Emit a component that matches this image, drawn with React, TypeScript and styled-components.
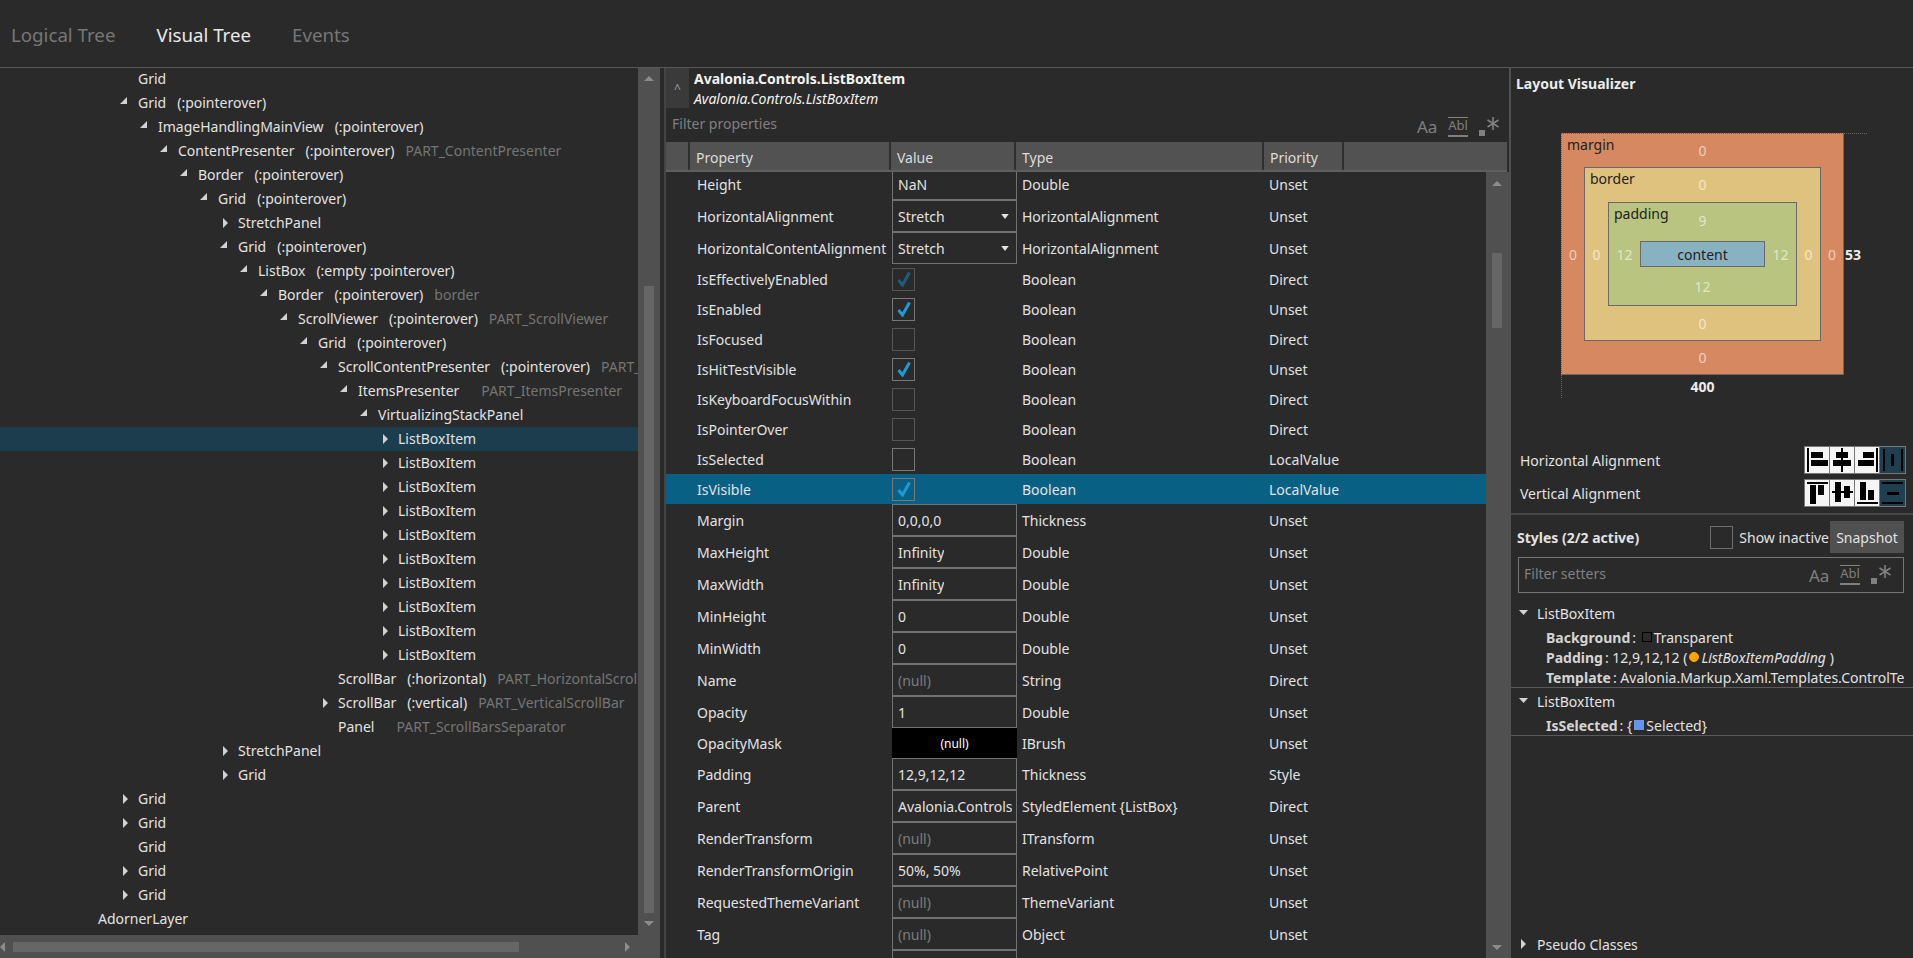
import React from "react";
import styled, { createGlobalStyle } from "styled-components";

const FONT = `"Noto Sans", "Open Sans", sans-serif`;

const GlobalStyle = createGlobalStyle`
  html, body {
    margin: 0;
    padding: 0;
    background: #2a2a2a;
  }
  * {
    box-sizing: border-box;
  }
`;

const Page = styled.div`
  width: 1913px;
  height: 958px;
  overflow: hidden;
  display: flex;
  flex-direction: column;
  background: #2a2a2a;
  color: #e2e2e2;
  font-family: ${FONT};
  font-size: 14px;
`;

const TopBar = styled.div`
  height: 67px;
  flex: none;
  display: flex;
  align-items: center;
  gap: 41px;
  padding: 2px 0 0 11px;
  box-shadow: 0 1px 0 #565656;
  position: relative;
  z-index: 1;
`;

const Tab = styled.div<{ $active?: boolean }>`
  font-size: 18.7px;
  color: ${(p) => (p.$active ? "#e8e8e8" : "#777")};
`;

const Main = styled.div`
  flex: 1;
  min-height: 0;
  display: flex;
`;

const LeftPanel = styled.div`
  width: 660px;
  flex: none;
  display: grid;
  grid-template-columns: 638px 22px;
  grid-template-rows: 868px 23px;
`;

const Tree = styled.div`
  overflow: hidden;
`;

const TreeRow = styled.div<{ $level: number; $selected?: boolean }>`
  height: 24px;
  display: flex;
  align-items: center;
  gap: 11px;
  white-space: nowrap;
  padding-left: ${(p) => 138 + p.$level * 20}px;
  padding-bottom: 2px;
  background: ${(p) => (p.$selected ? "#1c3d4d" : "transparent")};
`;

const ArrowSlot = styled.svg`
  width: 20px;
  height: 24px;
  margin: 2px -11px 0 -20px;
  flex: none;
`;

const PartName = styled.span`
  color: #757575;
`;

const VBar = styled.div<{ $width?: number }>`
  position: relative;
  background: #505050;
  ${(p) => (p.$width ? `width: ${p.$width}px; flex: none;` : "")}
`;

const VThumb = styled.div<{ $left: number; $top: number; $height: number }>`
  position: absolute;
  left: ${(p) => p.$left}px;
  top: ${(p) => p.$top}px;
  width: 10px;
  height: ${(p) => p.$height}px;
  background: #666;
`;

const BarArrow = styled.svg<{ $x: number; $y: number }>`
  position: absolute;
  left: ${(p) => p.$x}px;
  top: ${(p) => p.$y}px;
  width: 10px;
  height: 10px;
`;

const HBar = styled.div`
  position: relative;
  background: #505050;
`;

const HThumb = styled.div`
  position: absolute;
  left: 13px;
  top: 7px;
  width: 506px;
  height: 10px;
  background: #666;
`;

const Corner = styled.div`
  background: #505050;
`;

const LeftSplitter = styled.div`
  width: 6px;
  flex: none;
  border-right: 2px solid #444;
`;

const RightSplitter = styled.div`
  width: 2px;
  flex: none;
  background: #505050;
`;

const MiddlePanel = styled.div`
  width: 843px;
  flex: none;
  display: flex;
  flex-direction: column;
  min-height: 0;
`;

const TitleBar = styled.div`
  height: 44px;
  flex: none;
  display: flex;
  padding-top: 1px;
`;

const CollapseButton = styled.div`
  width: 23px;
  height: 40px;
  background: #3a3a3a;
  color: #9a9a9a;
  display: flex;
  align-items: center;
  justify-content: center;
  font-size: 12px;
`;

const TitleText = styled.div`
  margin-left: 5px;
  padding-top: 1px;
  line-height: 20px;
  color: #f2f2f2;
`;

const TitleBold = styled.div`
  font-weight: 700;
`;

const TitleItalic = styled.div`
  font-style: italic;
`;

const FilterRow = styled.div`
  height: 31px;
  flex: none;
  display: flex;
  align-items: center;
  padding: 0 8px 0 6px;
`;

const Placeholder = styled.div<{ $lift: number }>`
  flex: 1;
  color: #808080;
  margin-top: -${(p) => p.$lift}px;
`;

const SearchIcons = styled.div`
  display: flex;
  align-items: center;
  gap: 11px;
  color: #808080;
`;

const MatchCase = styled.span`
  font-size: 17px;
  width: 20px;
`;

const WholeWord = styled.span`
  font-size: 13px;
  width: 20px;
  height: 20px;
  line-height: 15px;
  text-align: center;
  border-top: 1px solid #808080;
  border-bottom: 2px solid #808080;
`;

const HeaderRow = styled.div`
  height: 30px;
  flex: none;
  width: 841px;
  display: grid;
  grid-template-columns: 24px 201px 125px 248px 80px 1fr;
  background: #525252;
  border-bottom: 2px solid #5e5e5e;
`;

const HeaderCell = styled.div`
  padding: 2px 0 0 6px;
  display: flex;
  align-items: center;
  border-right: 2px solid #2f2f2f;
  color: #dcdcdc;

  &:last-child {
    border-right: 0;
  }
`;

const PropertyArea = styled.div`
  flex: 1;
  min-height: 0;
  display: flex;
`;

const PropertyList = styled.div`
  width: 820px;
  flex: none;
  overflow: hidden;
`;

const PropertyRows = styled.div`
  margin-top: -4px;
`;

const PropertyRow = styled.div<{ $kind: string; $selected?: boolean }>`
  display: grid;
  grid-template-columns: 226px 125px 247px 1fr;
  height: ${(p) => (p.$kind === "check" || p.$kind === "brush" ? 30 : 32)}px;
  align-items: center;
  background: ${(p) => (p.$selected ? "#086085" : "transparent")};
`;

const PropName = styled.div`
  padding-left: 31px;
  white-space: nowrap;
  overflow: hidden;
`;

const PlainCell = styled.div`
  padding-left: 5px;
  white-space: nowrap;
`;

const ValueBox = styled.div<{ $muted?: boolean }>`
  height: 32px;
  border: 1px solid #727272;
  display: flex;
  align-items: center;
  padding: 0 4px 0 5px;
  color: ${(p) => (p.$muted ? "#7c7c7c" : "#e2e2e2")};
  position: relative;
`;

const ValueText = styled.span`
  overflow: hidden;
  white-space: nowrap;
`;

const DropArrow = styled.svg`
  position: absolute;
  right: 7px;
  top: 13px;
  width: 8px;
  height: 5px;
`;

const BrushCell = styled.div`
  height: 30px;
  background: #000;
  color: #fff;
  font-size: 12px;
  display: flex;
  align-items: center;
  justify-content: center;
`;

const CheckCell = styled.div<{ $state: string }>`
  width: 23px;
  height: 23px;
  border: 1px solid ${(p) => (p.$state === "dim" ? "#555" : "#777")};
  display: flex;
  align-items: center;
  justify-content: center;
`;

const RightPanel = styled.div`
  flex: 1;
  min-width: 0;
  display: flex;
  flex-direction: column;
`;

const PanelTitle = styled.div`
  height: 34px;
  flex: none;
  display: flex;
  align-items: center;
  padding: 0 0 2px 5px;
  font-weight: 700;
  color: #ececec;
`;

const Canvas = styled.div`
  margin: 32px 0 0 50px;
  height: 264px;
  flex: none;
  display: grid;
  grid-template-columns: 283px auto;
  grid-template-rows: 242px auto;
  position: relative;
`;

const DotLine = styled.div<{ $vertical?: boolean }>`
  position: absolute;
  ${(p) =>
    p.$vertical
      ? `left: 0; top: 242px; height: 23px; border-left: 1px dotted #666;`
      : `left: 283px; top: 0; width: 23px; border-top: 1px dotted #666;`}
`;

const ModelBox = styled.div<{ $bg: string; $side: number; $top: number; $bottom: number; $dotted?: boolean }>`
  position: relative;
  display: grid;
  grid-template-columns: ${(p) => p.$side}px 1fr ${(p) => p.$side}px;
  grid-template-rows: ${(p) => p.$top}px 1fr ${(p) => p.$bottom}px;
  background: ${(p) => p.$bg};
  border: 1px solid #696969;
  ${(p) => (p.$dotted ? "border-top-style: dotted; border-left-style: dotted;" : "")}
`;

const ModelLabel = styled.span`
  position: absolute;
  left: 5px;
  top: 1px;
  color: #222;
`;

const ModelNumber = styled.span<{ $lift?: number }>`
  display: flex;
  align-items: center;
  justify-content: center;
  padding-bottom: ${(p) => p.$lift ?? 0}px;
  color: rgba(255, 255, 255, 0.6);
`;

const ModelContent = styled.div`
  background: #88b2c2;
  border: 1px solid #696969;
  color: #1f1f1f;
  display: flex;
  align-items: center;
  justify-content: center;
`;

const Gap = styled.span``;

const SizeLabel = styled.div<{ $below?: boolean }>`
  font-weight: 700;
  color: #ececec;
  display: flex;
  align-items: center;
  justify-content: ${(p) => (p.$below ? "center" : "flex-start")};
  padding-left: ${(p) => (p.$below ? 0 : 1)}px;
  height: ${(p) => (p.$below ? "22px" : "auto")};
`;

const AlignSection = styled.div`
  margin-top: 49px;
  display: flex;
  flex-direction: column;
  gap: 5px;
  flex: none;
`;

const AlignRow = styled.div`
  height: 28px;
  display: flex;
  align-items: center;
  justify-content: space-between;
  padding: 0 7px 0 9px;
`;

const AlignGroup = styled.div`
  display: flex;
  border: 1px solid #777;
`;

const AlignButton = styled.div<{ $active?: boolean }>`
  width: 25px;
  height: 26px;
  background: ${(p) => (p.$active ? "#1f3f50" : "#f5f5f5")};
  border-right: 1px solid #777;

  &:last-child {
    border-right: 0;
  }

  svg {
    display: block;
    width: 25px;
    height: 26px;
  }
`;

const Rule = styled.div`
  height: 2px;
  flex: none;
  margin-top: 6px;
  background: #464646;
`;

const StylesHead = styled.div`
  display: flex;
  align-items: center;
  flex: none;
  padding: 6px 9px 0 6px;
`;

const StylesTitle = styled.div`
  font-weight: 700;
  flex: 1;
`;

const InactiveBox = styled.div`
  width: 23px;
  height: 23px;
  border: 1px solid #6e6e6e;
  margin-right: 6px;
`;

const SnapshotButton = styled.div`
  width: 74px;
  height: 32px;
  margin-left: 1px;
  background: #505050;
  display: flex;
  align-items: center;
  justify-content: center;
`;

const SetterFilter = styled.div`
  height: 36px;
  flex: none;
  margin: 4px 9px 0 7px;
  border: 1px solid #757575;
  display: flex;
  align-items: center;
  padding: 0 10px 0 5px;
`;

const Expander = styled.div<{ $first?: boolean }>`
  flex: none;
  margin-top: ${(p) => (p.$first ? 8 : 1)}px;
  border-bottom: 1px solid #5a5a5a;
`;

const ExpanderHead = styled.div`
  height: 24px;
  display: flex;
  align-items: center;
  gap: 8px;
  padding-left: 8px;
`;

const ExpanderBody = styled.div`
  padding: 3px 9px 0 35px;
  margin-bottom: -1px;
`;

const SetterRow = styled.div`
  height: 20px;
  display: flex;
  align-items: center;
  white-space: pre;
  overflow: hidden;
  padding-bottom: 2px;
`;

const SetterName = styled.span`
  font-weight: 700;
  color: #d4d4d4;
  margin-right: 2px;
`;

const Swatch = styled.span<{ $color: string; $round?: boolean }>`
  width: 10px;
  height: 10px;
  margin: 0 2px 0 2px;
  flex: none;
  background: ${(p) => p.$color};
  border: 1px solid ${(p) => (p.$color === "transparent" ? "#000" : p.$color)};
  border-radius: ${(p) => (p.$round ? "50%" : "0")};
`;

const Italic = styled.span`
  font-style: italic;
  margin-right: 4px;
`;

const PseudoHead = styled(ExpanderHead)`
  margin-top: auto;
  margin-bottom: 2px;
  flex: none;
`;

type Row = {
  level: number;
  name: string;
  classes?: string;
  part?: string;
  arrow?: "open" | "closed";
  selected?: boolean;
};

const listItems: Row[] = Array.from({ length: 10 }, (_, i) => ({
  level: 13,
  name: "ListBoxItem",
  arrow: "closed",
  selected: i === 0,
}));

const treeRows: Row[] = [
  { level: 0, name: "Grid" },
  { level: 0, name: "Grid", classes: "(:pointerover)", arrow: "open" },
  { level: 1, name: "ImageHandlingMainView", classes: "(:pointerover)", arrow: "open" },
  { level: 2, name: "ContentPresenter", classes: "(:pointerover)", part: "PART_ContentPresenter", arrow: "open" },
  { level: 3, name: "Border", classes: "(:pointerover)", arrow: "open" },
  { level: 4, name: "Grid", classes: "(:pointerover)", arrow: "open" },
  { level: 5, name: "StretchPanel", arrow: "closed" },
  { level: 5, name: "Grid", classes: "(:pointerover)", arrow: "open" },
  { level: 6, name: "ListBox", classes: "(:empty :pointerover)", arrow: "open" },
  { level: 7, name: "Border", classes: "(:pointerover)", part: "border", arrow: "open" },
  { level: 8, name: "ScrollViewer", classes: "(:pointerover)", part: "PART_ScrollViewer", arrow: "open" },
  { level: 9, name: "Grid", classes: "(:pointerover)", arrow: "open" },
  { level: 10, name: "ScrollContentPresenter", classes: "(:pointerover)", part: "PART_ContentPresenter", arrow: "open" },
  { level: 11, name: "ItemsPresenter", classes: "", part: "PART_ItemsPresenter", arrow: "open" },
  { level: 12, name: "VirtualizingStackPanel", arrow: "open" },
  ...listItems,
  { level: 10, name: "ScrollBar", classes: "(:horizontal)", part: "PART_HorizontalScrollBar" },
  { level: 10, name: "ScrollBar", classes: "(:vertical)", part: "PART_VerticalScrollBar", arrow: "closed" },
  { level: 10, name: "Panel", classes: "", part: "PART_ScrollBarsSeparator" },
  { level: 5, name: "StretchPanel", arrow: "closed" },
  { level: 5, name: "Grid", arrow: "closed" },
  { level: 0, name: "Grid", arrow: "closed" },
  { level: 0, name: "Grid", arrow: "closed" },
  { level: 0, name: "Grid" },
  { level: 0, name: "Grid", arrow: "closed" },
  { level: 0, name: "Grid", arrow: "closed" },
  { level: -2, name: "AdornerLayer" },
];

type Prop = {
  name: string;
  kind: "text" | "null" | "select" | "check" | "brush";
  value?: string;
  state?: "on" | "dimOn" | "off" | "dim";
  type: string;
  priority: string;
  selected?: boolean;
};

const props: Prop[] = [
  { name: "Height", kind: "text", value: "NaN", type: "Double", priority: "Unset" },
  { name: "HorizontalAlignment", kind: "select", value: "Stretch", type: "HorizontalAlignment", priority: "Unset" },
  { name: "HorizontalContentAlignment", kind: "select", value: "Stretch", type: "HorizontalAlignment", priority: "Unset" },
  { name: "IsEffectivelyEnabled", kind: "check", state: "dimOn", type: "Boolean", priority: "Direct" },
  { name: "IsEnabled", kind: "check", state: "on", type: "Boolean", priority: "Unset" },
  { name: "IsFocused", kind: "check", state: "dim", type: "Boolean", priority: "Direct" },
  { name: "IsHitTestVisible", kind: "check", state: "on", type: "Boolean", priority: "Unset" },
  { name: "IsKeyboardFocusWithin", kind: "check", state: "dim", type: "Boolean", priority: "Direct" },
  { name: "IsPointerOver", kind: "check", state: "dim", type: "Boolean", priority: "Direct" },
  { name: "IsSelected", kind: "check", state: "off", type: "Boolean", priority: "LocalValue" },
  { name: "IsVisible", kind: "check", state: "on", type: "Boolean", priority: "LocalValue", selected: true },
  { name: "Margin", kind: "text", value: "0,0,0,0", type: "Thickness", priority: "Unset" },
  { name: "MaxHeight", kind: "text", value: "Infinity", type: "Double", priority: "Unset" },
  { name: "MaxWidth", kind: "text", value: "Infinity", type: "Double", priority: "Unset" },
  { name: "MinHeight", kind: "text", value: "0", type: "Double", priority: "Unset" },
  { name: "MinWidth", kind: "text", value: "0", type: "Double", priority: "Unset" },
  { name: "Name", kind: "null", value: "(null)", type: "String", priority: "Direct" },
  { name: "Opacity", kind: "text", value: "1", type: "Double", priority: "Unset" },
  { name: "OpacityMask", kind: "brush", value: "(null)", type: "IBrush", priority: "Unset" },
  { name: "Padding", kind: "text", value: "12,9,12,12", type: "Thickness", priority: "Style" },
  { name: "Parent", kind: "text", value: "Avalonia.Controls.ListBox", type: "StyledElement {ListBox}", priority: "Direct" },
  { name: "RenderTransform", kind: "null", value: "(null)", type: "ITransform", priority: "Unset" },
  { name: "RenderTransformOrigin", kind: "text", value: "50%, 50%", type: "RelativePoint", priority: "Unset" },
  { name: "RequestedThemeVariant", kind: "null", value: "(null)", type: "ThemeVariant", priority: "Unset" },
  { name: "Tag", kind: "null", value: "(null)", type: "Object", priority: "Unset" },
  { name: "TemplatedParent", kind: "null", value: "(null)", type: "AvaloniaObject", priority: "Direct" },
];

const TreeArrow = ({ open }: { open: boolean }) => (
  <ArrowSlot viewBox="0 0 20 24">
    <polygon fill="#d2d2d2" points={open ? "9,6 9,13 2,13" : "5,7 10,12 5,17"} />
  </ArrowSlot>
);

const ScrollArrow = ({ dir, x, y }: { dir: "up" | "down" | "left" | "right"; x: number; y: number }) => {
  const points = {
    up: "0,7 10,7 5,2",
    down: "0,3 10,3 5,8",
    left: "7,0 7,10 2,5",
    right: "3,0 3,10 8,5",
  }[dir];
  return (
    <BarArrow $x={x} $y={y} viewBox="0 0 10 10">
      <polygon fill="#8c8c8c" points={points} />
    </BarArrow>
  );
};

const CheckMark = ({ color }: { color: string }) => (
  <svg width="14" height="16" viewBox="0 0 14 16">
    <path d="M1.5 9 L5.5 14 L12.5 1.5" fill="none" stroke={color} strokeWidth="3" />
  </svg>
);

const RegexIcon = () => (
  <svg width="22" height="22" viewBox="0 0 22 22">
    <rect x="0" y="14" width="6" height="6" fill="#808080" />
    <path d="M14 1 V14 M8.5 4 L19.5 11 M19.5 4 L8.5 11" stroke="#808080" strokeWidth="1.6" fill="none" />
  </svg>
);

const SearchToggles = () => (
  <SearchIcons>
    <MatchCase>Aa</MatchCase>
    <WholeWord>Abl</WholeWord>
    <RegexIcon />
  </SearchIcons>
);

const AlignIcon = ({ rects, color = "#000" }: { rects: number[][]; color?: string }) => (
  <svg viewBox="0 0 25 26">
    {rects.map(([x, y, w, h], i) => (
      <rect key={i} x={x} y={y} width={w} height={h} fill={color} />
    ))}
  </svg>
);

const horizontalIcons = [
  [[2, 1, 2, 24], [6, 5, 12, 6], [6, 13, 17, 6]],
  [[11, 1, 2, 24], [6, 5, 12, 6], [3, 13, 18, 6]],
  [[21, 1, 2, 24], [8, 5, 11, 6], [3, 13, 16, 6]],
  [[3, 2, 2, 22], [21, 2, 2, 22], [11, 7, 3, 12]],
];

const verticalIcons = [
  [[2, 2, 21, 2], [5, 5, 6, 19], [13, 5, 6, 10]],
  [[2, 11, 21, 2], [5, 2, 6, 20], [14, 6, 6, 12]],
  [[2, 22, 21, 2], [5, 2, 6, 18], [13, 10, 6, 10]],
  [[2, 2, 21, 2], [2, 22, 21, 2], [7, 12, 12, 3]],
];

const AlignButtons = ({ icons }: { icons: number[][][] }) => (
  <AlignGroup>
    {icons.map((rects, i) => (
      <AlignButton key={i} $active={i === 3}>
        <AlignIcon rects={rects} />
      </AlignButton>
    ))}
  </AlignGroup>
);

const ExpandGlyph = ({ open }: { open: boolean }) => (
  <svg width="10" height="10" viewBox="0 0 10 10">
    <polygon fill="#d2d2d2" points={open ? "0,2 9,2 4.5,7" : "2,0 7,5 2,10"} />
  </svg>
);

const ValueEditor = ({ prop }: { prop: Prop }) => {
  if (prop.kind === "check") {
    const color = prop.state === "dimOn" ? "#1b5f80" : "#1e9ad6";
    return (
      <CheckCell $state={prop.state === "on" || prop.state === "off" ? "on" : "dim"}>
        {(prop.state === "on" || prop.state === "dimOn") && <CheckMark color={color} />}
      </CheckCell>
    );
  }
  if (prop.kind === "brush") {
    return <BrushCell>{prop.value}</BrushCell>;
  }
  return (
    <ValueBox $muted={prop.kind === "null"}>
      <ValueText>{prop.value}</ValueText>
      {prop.kind === "select" && (
        <DropArrow viewBox="0 0 9 6">
          <polygon fill="#e2e2e2" points="0,0 9,0 4.5,6" />
        </DropArrow>
      )}
    </ValueBox>
  );
};

const App = () => {
  return (
    <Page>
      <GlobalStyle />
      <TopBar>
        <Tab>Logical Tree</Tab>
        <Tab $active>Visual Tree</Tab>
        <Tab>Events</Tab>
      </TopBar>
      <Main>
        <LeftPanel>
          <Tree>
            {treeRows.map((row, i) => (
              <TreeRow key={i} $level={row.level} $selected={row.selected}>
                {row.arrow && <TreeArrow open={row.arrow === "open"} />}
                <span>{row.name}</span>
                {row.classes !== undefined && <span>{row.classes}</span>}
                {row.part && <PartName>{row.part}</PartName>}
              </TreeRow>
            ))}
          </Tree>
          <VBar>
            <ScrollArrow dir="up" x={6} y={7} />
            <VThumb $left={6} $top={219} $height={627} />
            <ScrollArrow dir="down" x={6} y={851} />
          </VBar>
          <HBar>
            <ScrollArrow dir="left" x={-2} y={7} />
            <HThumb />
            <ScrollArrow dir="right" x={622} y={7} />
          </HBar>
          <Corner />
        </LeftPanel>
        <LeftSplitter />
        <MiddlePanel>
          <TitleBar>
            <CollapseButton>^</CollapseButton>
            <TitleText>
              <TitleBold>Avalonia.Controls.ListBoxItem</TitleBold>
              <TitleItalic>Avalonia.Controls.ListBoxItem</TitleItalic>
            </TitleText>
          </TitleBar>
          <FilterRow>
            <Placeholder $lift={7}>Filter properties</Placeholder>
            <SearchToggles />
          </FilterRow>
          <HeaderRow>
            <HeaderCell />
            <HeaderCell>Property</HeaderCell>
            <HeaderCell>Value</HeaderCell>
            <HeaderCell>Type</HeaderCell>
            <HeaderCell>Priority</HeaderCell>
            <HeaderCell />
          </HeaderRow>
          <PropertyArea>
            <PropertyList>
              <PropertyRows>
                {props.map((prop) => (
                  <PropertyRow key={prop.name} $kind={prop.kind} $selected={prop.selected}>
                    <PropName>{prop.name}</PropName>
                    <ValueEditor prop={prop} />
                    <PlainCell>{prop.type}</PlainCell>
                    <PlainCell>{prop.priority}</PlainCell>
                  </PropertyRow>
                ))}
              </PropertyRows>
            </PropertyList>
            <VBar $width={23}>
              <ScrollArrow dir="up" x={6} y={7} />
              <VThumb $left={6} $top={81} $height={75} />
              <ScrollArrow dir="down" x={6} y={770} />
            </VBar>
          </PropertyArea>
        </MiddlePanel>
        <RightSplitter />
        <RightPanel>
          <PanelTitle>Layout Visualizer</PanelTitle>
          <Canvas>
            <DotLine />
            <DotLine $vertical />
            <ModelBox $bg="#d68860" $side={22} $top={33} $bottom={33} $dotted>
              <ModelLabel>margin</ModelLabel>
              <Gap />
              <ModelNumber>0</ModelNumber>
              <Gap />
              <ModelNumber>0</ModelNumber>
              <ModelBox $bg="#e0c27f" $side={23} $top={34} $bottom={34}>
                <ModelLabel>border</ModelLabel>
                <Gap />
                <ModelNumber $lift={2}>0</ModelNumber>
                <Gap />
                <ModelNumber>0</ModelNumber>
                <ModelBox $bg="#b8c47f" $side={31} $top={38} $bottom={38}>
                  <ModelLabel>padding</ModelLabel>
                  <Gap />
                  <ModelNumber $lift={4}>9</ModelNumber>
                  <Gap />
                  <ModelNumber>12</ModelNumber>
                  <ModelContent>content</ModelContent>
                  <ModelNumber>12</ModelNumber>
                  <Gap />
                  <ModelNumber>12</ModelNumber>
                  <Gap />
                </ModelBox>
                <ModelNumber>0</ModelNumber>
                <Gap />
                <ModelNumber>0</ModelNumber>
                <Gap />
              </ModelBox>
              <ModelNumber>0</ModelNumber>
              <Gap />
              <ModelNumber>0</ModelNumber>
              <Gap />
            </ModelBox>
            <SizeLabel>53</SizeLabel>
            <SizeLabel $below>400</SizeLabel>
          </Canvas>
          <AlignSection>
            <AlignRow>
              <span>Horizontal Alignment</span>
              <AlignButtons icons={horizontalIcons} />
            </AlignRow>
            <AlignRow>
              <span>Vertical Alignment</span>
              <AlignButtons icons={verticalIcons} />
            </AlignRow>
          </AlignSection>
          <Rule />
          <StylesHead>
            <StylesTitle>Styles (2/2 active)</StylesTitle>
            <InactiveBox />
            <span>Show inactive</span>
            <SnapshotButton>Snapshot</SnapshotButton>
          </StylesHead>
          <SetterFilter>
            <Placeholder $lift={4}>Filter setters</Placeholder>
            <SearchToggles />
          </SetterFilter>
          <Expander $first>
            <ExpanderHead>
              <ExpandGlyph open />
              <span>ListBoxItem</span>
            </ExpanderHead>
            <ExpanderBody>
              <SetterRow>
                <SetterName>Background</SetterName>
                {": "}
                <Swatch $color="transparent" />
                Transparent
              </SetterRow>
              <SetterRow>
                <SetterName>Padding</SetterName>
                {": 12,9,12,12 ("}
                <Swatch $color="#ffa500" $round />
                <Italic>ListBoxItemPadding</Italic>)
              </SetterRow>
              <SetterRow>
                <SetterName>Template</SetterName>
                {": Avalonia.Markup.Xaml.Templates.ControlTemplate"}
              </SetterRow>
            </ExpanderBody>
          </Expander>
          <Expander>
            <ExpanderHead>
              <ExpandGlyph open />
              <span>ListBoxItem</span>
            </ExpanderHead>
            <ExpanderBody>
              <SetterRow>
                <SetterName>IsSelected</SetterName>
                {": {"}
                <Swatch $color="#6495ed" />
                {"Selected}"}
              </SetterRow>
            </ExpanderBody>
          </Expander>
          <PseudoHead>
            <ExpandGlyph open={false} />
            <span>Pseudo Classes</span>
          </PseudoHead>
        </RightPanel>
      </Main>
    </Page>
  );
};

export default App;
